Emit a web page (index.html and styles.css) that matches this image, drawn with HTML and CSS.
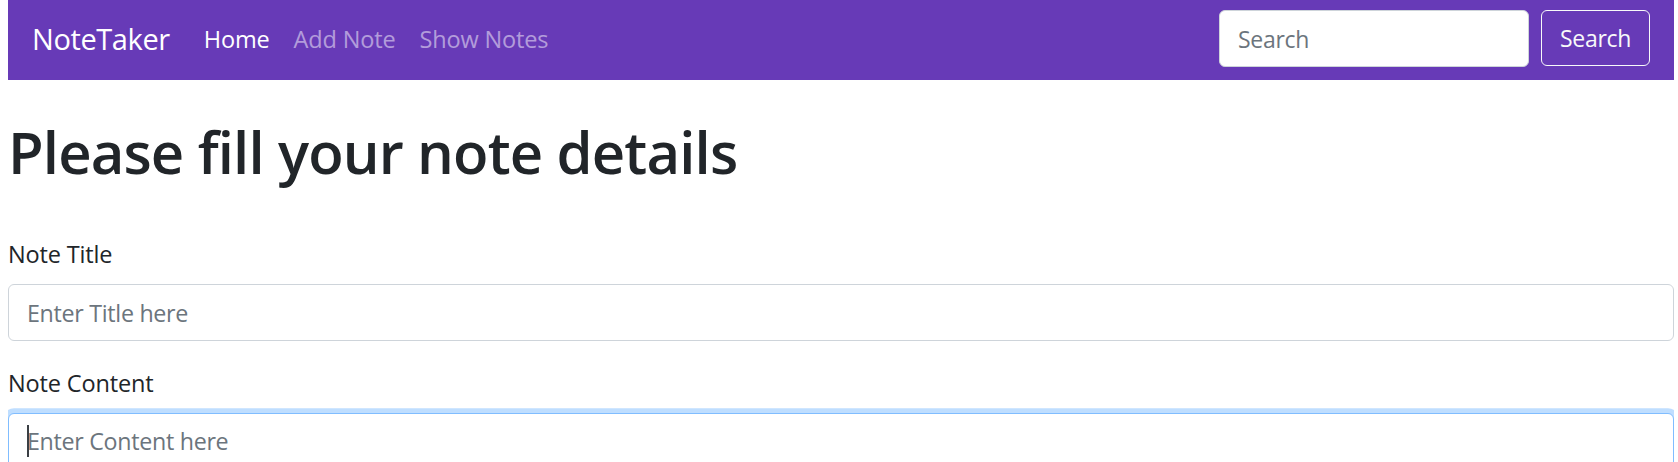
FILE: index.html
```html
<!DOCTYPE html>
<html lang="en">
<head>
<meta charset="utf-8">
<title>NoteTaker</title>
<link rel="stylesheet" href="styles.css">
</head>
<body>
<nav class="navbar">
  <a class="brand" href="#">NoteTaker</a>
  <ul class="nav">
    <li><a class="nav-link active" href="#">Home</a></li>
    <li><a class="nav-link" href="#">Add Note</a></li>
    <li><a class="nav-link" href="#">Show Notes</a></li>
  </ul>
  <form class="search">
    <input class="search-input" type="search" placeholder="Search">
    <button class="search-btn" type="button">Search</button>
  </form>
</nav>
<main class="page">
  <h1 class="title">Please fill your note details</h1>
  <form class="note-form">
    <div class="group">
      <label class="label" for="t">Note Title</label>
      <input class="field" id="t" type="text" placeholder="Enter Title here">
    </div>
    <div class="group">
      <label class="label" for="c">Note Content</label>
      <div class="area-wrap">
        <textarea class="field area is-focused" id="c" placeholder="Enter Content here"></textarea>
        <span class="caret"></span>
      </div>
    </div>
  </form>
</main>
</body>
</html>
```

FILE: styles.css
```css
html {
  overflow: hidden;
}
body {
  margin: 0 4px 0 8px;
  font-family: "Open Sans", "Noto Sans", sans-serif;
  color: #212529;
  background: #fff;
}
.navbar {
  display: flex;
  align-items: center;
  height: 80px;
  box-sizing: border-box;
  padding: 10px 24px 13px 24px;
  background: #673ab7;
}
.brand {
  font-size: 29px;
  letter-spacing: -0.4px;
  line-height: 45px;
  color: #fff;
  text-decoration: none;
  margin-right: 22px;
}
.nav {
  display: flex;
  list-style: none;
  margin: 0;
  padding: 0;
}
.nav-link {
  display: block;
  padding: 0 12px;
  font-size: 23.5px;
  letter-spacing: -0.15px;
  line-height: 36px;
  color: rgba(255, 255, 255, 0.5);
  text-decoration: none;
}
.nav-link.active {
  color: #fff;
}
.search {
  display: flex;
  align-items: flex-start;
  gap: 12px;
  margin: 0 0 0 auto;
  align-self: flex-start;
}
.search-input {
  box-sizing: border-box;
  width: 310px;
  height: 57px;
  padding: 0 18px;
  border: 1px solid #ced4da;
  border-radius: 6px;
  font-family: inherit;
  font-size: 23px;
  letter-spacing: -0.3px;
  color: #495057;
  background: #fff;
}
.search-input::placeholder,
.field::placeholder {
  color: #6c757d;
  opacity: 1;
}
.search-btn {
  box-sizing: border-box;
  width: 109px;
  height: 56px;
  padding: 0;
  border: 1px solid #f8f9fa;
  border-radius: 6px;
  background: transparent;
  color: #f8f9fa;
  font-family: inherit;
  font-size: 23px;
  letter-spacing: -0.3px;
}
.page {
  display: flex;
  flex-direction: column;
}
.title {
  margin: 36px 0 48px 0;
  font-size: 58px;
  font-weight: 600;
  letter-spacing: -0.85px;
  line-height: 72px;
}
.note-form {
  display: flex;
  flex-direction: column;
}
.group {
  display: flex;
  flex-direction: column;
  margin-bottom: 24px;
}
.label {
  font-size: 23.5px;
  letter-spacing: -0.15px;
  line-height: 36px;
  margin-bottom: 12px;
}
.field {
  box-sizing: border-box;
  width: 100%;
  height: 57px;
  padding: 9px 18px;
  margin: 0;
  border: 1px solid #ced4da;
  border-radius: 6px;
  font-family: inherit;
  font-size: 23.25px;
  letter-spacing: -0.3px;
  line-height: 36px;
  color: #495057;
  background: #fff;
  outline: none;
}
.area-wrap {
  position: relative;
}
.area {
  display: block;
  height: 160px;
  resize: none;
  caret-color: transparent;
}
.is-focused {
  border-color: #80bdff;
  box-shadow: 0 0 0 4.8px rgba(0, 123, 255, 0.25);
}
.caret {
  position: absolute;
  left: 19px;
  top: 12px;
  width: 2px;
  height: 32px;
  background: #3a3f44;
}
```
